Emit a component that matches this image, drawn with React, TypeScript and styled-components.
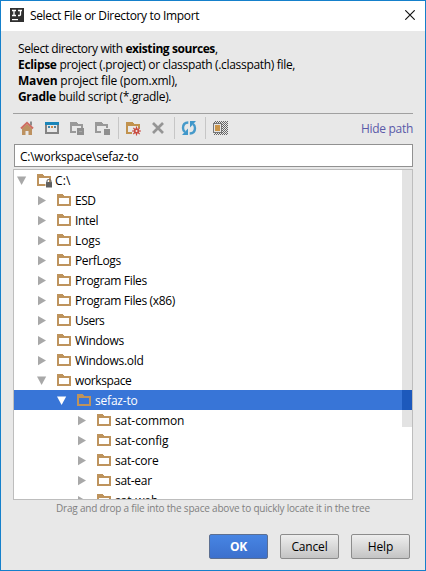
import React from "react";
import styled, { createGlobalStyle } from "styled-components";

const GlobalStyle = createGlobalStyle`
  * { box-sizing: border-box; }
  body { margin: 0; overflow: hidden; }
  svg { display: block; flex: none; }
`;

const Dialog = styled.div`
  width: 426px;
  height: 571px;
  border: 1px solid #1580cb;
  background: #e8e8e8;
  color: #000;
  font: 12px/16px "Open Sans", "Noto Sans", sans-serif;
  white-space: nowrap;
  display: flex;
  flex-direction: column;
`;

const TitleBar = styled.header`
  height: 30px;
  flex: none;
  background: #fff;
  display: flex;
  align-items: center;
  padding: 0 10px 0 9px;

  svg { margin-bottom: 2px; }
`;

const Text = styled.span<{ $spacing?: number }>`
  letter-spacing: ${(p) => p.$spacing ?? -0.1}px;
`;

const Title = styled(Text)`
  margin-left: 6px;
  flex: 1;
`;

const Intro = styled.section`
  height: 83px;
  flex: none;
  margin: 0 12px;
  padding: 10px 0 0 5px;
  border-bottom: 1px solid #a0a0a0;
  display: flex;
  flex-direction: column;
`;

const Toolbar = styled.nav`
  height: 30px;
  flex: none;
  margin: 0 12px;
  padding: 0 0 2px 6px;
  display: flex;
  align-items: center;
  gap: 9px;
`;

const Divider = styled.i`
  width: 1px;
  height: 22px;
  margin: 0 -3px 0 -1px;
  background: #c6c6c6;
`;

const PathLink = styled(Text)`
  margin-left: auto;
  padding-top: 1px;
  color: #5a5aa8;
`;

const PathField = styled.div`
  height: 23px;
  flex: none;
  margin: 0 12px 2px 13px;
  padding: 4px 5px 0;
  border: 1px solid #919191;
  background: #fff;
`;

const Tree = styled.div`
  height: 331px;
  flex: none;
  margin: 0 12px;
  border: 1px solid #bdbdbd;
  background: #fff;
  overflow: hidden;
  position: relative;
`;

const Row = styled.div<{ $depth: number; $selected?: boolean }>`
  height: 20px;
  display: flex;
  align-items: center;
  padding-left: ${(p) => 2 + p.$depth * 20}px;
  background: ${(p) => (p.$selected ? "#3875d7" : "transparent")};
  color: ${(p) => (p.$selected ? "#fff" : "#000")};

  svg + svg { margin: 0 3px 0 4px; }
`;

const Label = styled(Text)`
  padding-top: 2px;
`;

const ScrollThumb = styled.div`
  position: absolute;
  top: 0;
  right: 0;
  width: 10px;
  height: 257px;
  background: #e3e3e3;
`;

const ThumbOverSelection = styled.div`
  margin-top: 220px;
  height: 20px;
  background: #1d59bc;
`;

const Hint = styled.div`
  height: 34px;
  flex: none;
  text-align: center;
  font-size: 10px;
  line-height: 16px;
  color: #808080;
`;

const Buttons = styled.footer`
  display: flex;
  gap: 12px;
  justify-content: flex-end;
  padding-right: 15px;
`;

const Button = styled.button<{ $primary?: boolean }>`
  width: 59px;
  height: 25px;
  padding: 1px 0 0;
  border: 1px solid ${(p) => (p.$primary ? "#5c6f91" : "#8c8c8c")};
  border-radius: 2px;
  background: ${(p) =>
    p.$primary
      ? "linear-gradient(#4785e3, #3c70cd)"
      : "linear-gradient(#eeeeee, #c4c4c4)"};
  color: ${(p) => (p.$primary ? "#fff" : "#000")};
  font: inherit;
  font-weight: ${(p) => (p.$primary ? 700 : 400)};
  letter-spacing: -0.15px;
`;

const Icon = ({ children }: { children: React.ReactNode }) => (
  <svg width="16" height="16" viewBox="0 0 16 16" shapeRendering="crispEdges">
    {children}
  </svg>
);

const Gear = () => (
  <g shapeRendering="auto" transform="translate(.5 1)">
    <path d="M11 5.500v9M6.500 10h9M7.800 6.800l6.400 6.400M14.200 6.800l-6.400 6.400" stroke="#c94b40" strokeWidth="1.200" />
    <circle cx="11" cy="10" r="2.800" fill="#c94b40" />
    <circle cx="11" cy="10" r="1" fill="#eee" />
  </g>
);

const Logo = () => (
  <svg width="14" height="14" viewBox="1 1 14 14">
    <path fill="#303030" d="M1 1h14v14H1z" />
    <path d="M3 3.500h4M5 3v6M3 8.500h4M9 3.500h4M11.500 3v4.500q0 1-1 1H9" fill="none" stroke="#fff" strokeWidth="1.300" />
    <path d="M3 12h6v1.200H3z" fill="#fff" />
  </svg>
);

const Close = () => (
  <svg width="10" height="10" viewBox="0 0 10 10">
    <path d="M.3.3l9.400 9.400M9.700.3L.3 9.700" stroke="#111" strokeWidth="1.150" />
  </svg>
);

const Home = () => (
  <svg width="16" height="16" viewBox="0 0 16 16">
    <path d="M3 8.500L8 4l5 4.500V15H9.500v-4h-3v4H3z" fill="#bd9261" />
    <path d="M11 1.500h2v4h-2z" fill="#8b8b8b" />
    <path d="M2 8.500L8 2.800l6 5.700" fill="none" stroke="#cf6d62" strokeWidth="2" />
  </svg>
);

const ProjectWindow = () => (
  <Icon>
    <path d="M1 2h14v3H1z" fill="#1b85b8" />
    <path d="M1 5h2v7h10V5h2v9H1z" fill="#838383" />
    <path d="M4 6h2v2H4z" fill="#3f86ad" />
    <path d="M7 6h2v2H7z" fill="#d08a45" />
    <path d="M10 6h2v2h-2z" fill="#5a7f96" />
  </Icon>
);

const GreyFolder = ({ filled }: { filled?: boolean }) => (
  <Icon>
    <path d="M1 2h6l2 2h5v4h-2V6H3v5h4v2H1z" fill="#999" />
    <path d={filled ? "M10 9h6v6h-6z" : "M8 8h7v7H8z"} fill="#8f8f8f" />
    {!filled && <path d="M10 11h3v1h-3z" fill="#a8a8a8" />}
  </Icon>
);

const NewFolder = () => (
  <Icon>
    <path d="M1 2h6l2 2h6v4h-2V6H3v6h4v2H1z" fill="#c1924e" />
    <Gear />
  </Icon>
);

const Delete = () => (
  <svg width="16" height="16" viewBox="0 0 16 16">
    <path d="M3 3l10 10M13 3L3 13" stroke="#959595" strokeWidth="2.700" />
  </svg>
);

const Refresh = () => (
  <svg width="16" height="16" viewBox="0 0 16 16">
    <path d="M7.300 2.500Q2 2.600 2 8q0 2.600 2 4M8.700 13.500Q14 13.400 14 8q0-2.600-2-4" fill="none" stroke="#469aca" strokeWidth="2.400" />
    <path d="M7 8.500V15H1zM9 7.500V1h6z" fill="#3f97ca" />
  </svg>
);

const HiddenFiles = () => (
  <Icon>
    <defs>
      <pattern id="checks" width="2" height="2" patternUnits="userSpaceOnUse">
        <path d="M0 0h1v1H0zM1 1h1v1H1z" fill="#666" />
      </pattern>
    </defs>
    <path d="M2 1h14v14H2z" fill="url(#checks)" />
    <path d="M1 3h9v10H1z" fill="#777" />
    <path d="M2 4h7v8H2z" fill="#e5e5e5" />
    <path d="M3 5h5v6H3z" fill="#cb9549" />
  </Icon>
);

const Arrow = ({ open, selected }: { open?: boolean; selected?: boolean }) => (
  <svg width="16" height="16" viewBox="0 0 16 16">
    <path
      d={open ? "M1 4.500h9.200L5.600 13z" : "M2 4v9.200L10 8.600z"}
      fill={selected ? "#fff" : "#a8a8a8"}
    />
  </svg>
);

const Folder = ({ locked }: { locked?: boolean }) => (
  <Icon>
    <path fillRule="evenodd" d="M1 2h6v1h1v1h7v10H1zM3 6v6h10V6z" fill="#be935c" />
    {locked && (
      <g shapeRendering="auto">
        <path d="M9.500 10h6.500v6H9.500z" fill="#fff" />
        <path d="M10 10h6v5.500h-6z" fill="#606060" />
        <path d="M11 11V9q0-1.500 2-1.500t2 1.500v2" fill="none" stroke="#707070" strokeWidth="1.200" />
      </g>
    )}
  </Icon>
);

interface Entry {
  name: string;
  depth: number;
  open?: boolean;
  selected?: boolean;
  spacing?: number;
}

const entries: Entry[] = [
  { name: "C:\\", depth: 0, open: true, spacing: 0.2 },
  { name: "ESD", depth: 1, spacing: -0.5 },
  { name: "Intel", depth: 1, spacing: -0.3 },
  { name: "Logs", depth: 1, spacing: -0.1 },
  { name: "PerfLogs", depth: 1, spacing: -0.35 },
  { name: "Program Files", depth: 1, spacing: -0.35 },
  { name: "Program Files (x86)", depth: 1, spacing: -0.35 },
  { name: "Users", depth: 1, spacing: -0.5 },
  { name: "Windows", depth: 1, spacing: -0.3 },
  { name: "Windows.old", depth: 1, spacing: -0.3 },
  { name: "workspace", depth: 1, spacing: -0.4, open: true },
  { name: "sefaz-to", depth: 2, spacing: -0.2, open: true, selected: true },
  { name: "sat-common", depth: 3 },
  { name: "sat-config", depth: 3 },
  { name: "sat-core", depth: 3, spacing: -0.2 },
  { name: "sat-ear", depth: 3, spacing: -0.3 },
  { name: "sat-web", depth: 3 },
];

export default function App() {
  return (
    <>
      <GlobalStyle />
      <Dialog>
        <TitleBar>
          <Logo />
          <Title $spacing={-0.35}>Select File or Directory to Import</Title>
          <Close />
        </TitleBar>
        <Intro>
          <Text $spacing={-0.42}>Select directory with <b>existing sources</b>,</Text>
          <Text $spacing={-0.32}><b>Eclipse</b> project (.project) or classpath (.classpath) file,</Text>
          <Text $spacing={-0.2}><b>Maven</b> project file (pom.xml),</Text>
          <Text $spacing={-0.33}><b>Gradle</b> build script (*.gradle).</Text>
        </Intro>
        <Toolbar>
          <Home />
          <ProjectWindow />
          <GreyFolder />
          <GreyFolder filled />
          <Divider />
          <NewFolder />
          <Delete />
          <Divider />
          <Refresh />
          <Divider />
          <HiddenFiles />
          <PathLink $spacing={-0.3}>Hide path</PathLink>
        </Toolbar>
        <PathField><Text $spacing={-0.25}>C:\workspace\sefaz-to</Text></PathField>
        <Tree>
          {entries.map((e) => (
            <Row key={e.name} $depth={e.depth} $selected={e.selected}>
              <Arrow open={e.open} selected={e.selected} />
              <Folder locked={e.depth === 0} />
              <Label $spacing={e.spacing}>{e.name}</Label>
            </Row>
          ))}
          <ScrollThumb><ThumbOverSelection /></ScrollThumb>
        </Tree>
        <Hint><Text $spacing={-0.2}>Drag and drop a file into the space above to quickly locate it in the tree</Text></Hint>
        <Buttons>
          <Button $primary>OK</Button>
          <Button>Cancel</Button>
          <Button>Help</Button>
        </Buttons>
      </Dialog>
    </>
  );
}
